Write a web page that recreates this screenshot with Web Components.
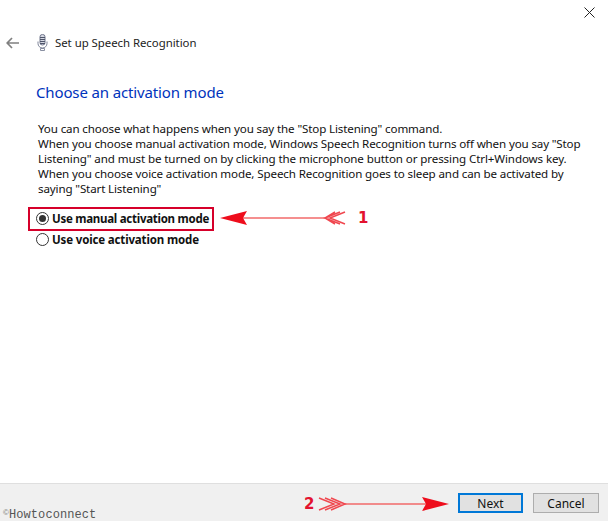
<!DOCTYPE html>
<html><head><meta charset="utf-8">
<style>
html,body{margin:0;padding:0;background:#fff}
body{width:608px;height:521px;overflow:hidden;font-family:"Noto Sans","Open Sans",sans-serif}
</style></head>
<body>
<wizard-window>
  <wizard-header slot="header" title-text="Set up Speech Recognition"></wizard-header>
  <h-title>Choose an activation mode</h-title>
  <p-text>
    <span style="letter-spacing:-.135px">You can choose what happens when you say the "Stop Listening" command.</span><br>
    <span style="letter-spacing:-.15px">When you choose manual activation mode, Windows Speech Recognition turns off when you say "Stop</span><br>
    <span style="letter-spacing:-.11px">Listening" and must be turned on by clicking the microphone button or pressing Ctrl+Windows key.</span><br>
    <span style="letter-spacing:-.13px">When you choose voice activation mode, Speech Recognition goes to sleep and can be activated by</span><br>
    <span style="letter-spacing:-.14px">saying "Start Listening"</span>
  </p-text>
  <radio-opt checked>Use manual activation mode</radio-opt>
  <radio-opt>Use voice activation mode</radio-opt>
  <wizard-footer slot="footer"></wizard-footer>
</wizard-window>
<red-notes></red-notes>
<script>
function def(name,html,onInit){
  customElements.define(name,class extends HTMLElement{
    constructor(){super();this.attachShadow({mode:'open'}).innerHTML=typeof html==='function'?html(this):html;}
    connectedCallback(){if(onInit)onInit(this);}
  });
}
def('wizard-window',`<style>
:host{display:flex;flex-direction:column;width:608px;height:521px;box-sizing:border-box;color:#000;font:12px/15px "Noto Sans","Open Sans",sans-serif}
.close{display:flex;justify-content:flex-end;padding:7px 13px 0 0;height:24px;box-sizing:border-box}
.main{flex:1;display:flex;flex-direction:column}
</style>
<div class="close"><svg width="11" height="11" viewBox="0 0 11 11"><path d="M.5.5l10 10M10.5.5l-10 10" stroke="#222" stroke-width="1" fill="none"/></svg></div>
<div class="main"><slot name="header"></slot><slot></slot></div>
<slot name="footer"></slot>`);
def('wizard-header',el=>`<style>
:host{display:flex;align-items:center;height:37px;box-sizing:border-box;padding:0 0 0 6px;color:#222;font-size:11.4px;letter-spacing:-.03px}
svg{display:block}
.a{margin-right:18px}.m{margin-right:7px}
</style>
<svg class="a" width="13" height="12" viewBox="0 0 13 12"><path d="M6 1L1.200 6 6 11M1.500 6H13" stroke="#808080" stroke-width="1.700" fill="none"/></svg>
<svg class="m" width="11" height="17" viewBox="0 0 11 17"><rect x="3" y=".5" width="5" height="10.500" rx="2.300" fill="#d5d8e2" stroke="#6f758b"/><path d="M3 3.500h5M3 5.500h5M3 7.500h5M3 9.500h5" stroke="#4f556a" stroke-width="1"/><path d="M1 7.500v2a4.500 4.500 0 0 0 9 0v-2" stroke="#7c8296" fill="none"/><path d="M3.500 14.500h4v2h-4z" fill="#fff" stroke="#7c8296" stroke-width=".9"/></svg>
<span>${el.getAttribute('title-text')}</span>`);
def('h-title',`<style>:host{display:block;margin:21px 0 0 36px;height:20px;font-size:15px;line-height:20px;color:#0033bc;letter-spacing:-.14px}</style><slot></slot>`);
def('p-text',`<style>:host{display:block;margin:19px 0 0 38px;font-size:11.600px;line-height:15px;white-space:nowrap;color:#111}</style><slot></slot>`);
def('radio-opt',el=>`<style>
:host{display:flex;align-items:center;height:21px;margin-left:36px;font-size:11.500px;font-weight:700;color:#111}
.r{width:13px;height:13px;box-sizing:border-box;border:1px solid #333;border-radius:50%;background:#fff;margin-right:3px;display:flex;align-items:center;justify-content:center}
.d{width:7px;height:7px;border-radius:50%;background:#333}
</style><span class="r">${el.hasAttribute('checked')?'<span class="d"></span>':''}</span><slot></slot>`,el=>{
  if(el.hasAttribute('checked')){el.style.marginTop='12px';el.style.letterSpacing='-.27px';}else{el.style.letterSpacing='-.15px';}
});
def('wizard-footer',`<style>
:host{display:flex;justify-content:flex-end;align-items:flex-start;gap:10px;height:38px;box-sizing:border-box;background:#f0f0f0;border-top:1px solid #dfdfdf;padding:9px 9px 0 0;position:relative}
button{width:66px;height:20px;box-sizing:border-box;background:#e1e1e1;border:1px solid #adadad;padding:1px 0 0;font:12px/1 "Noto Sans","Open Sans",sans-serif;color:#111}
.p{border:2px solid #0078d7;width:65px}
.w{position:absolute;left:3px;top:24px;font:12px/14px "Liberation Mono",monospace;letter-spacing:.08px;color:#555}
.w sup{font-size:8px;line-height:0;vertical-align:3px;color:#777;font-family:"Liberation Sans",sans-serif}
</style>
<span class="w"><sup>©</sup>Howtoconnect</span>
<button class="p">Next</button><button>Cancel</button>`);
def('red-notes',`<style>
:host{display:block;position:absolute;left:0;top:0;width:608px;height:521px;pointer-events:none}
.box{position:absolute;left:28px;top:207px;width:186px;height:24px;box-sizing:border-box;border:2px solid #d6002a}
svg{position:absolute;left:0;top:0}
.n{position:absolute;font:700 15px/18px "DejaVu Sans",sans-serif;color:#e3122f}
</style>
<div class="box"></div>
<svg width="608" height="521" viewBox="0 0 608 521" fill="none">
<path d="M240 218H326" stroke="#f26a6a" stroke-width="1.500"/>
<path d="M220 218L247 211L243 218L247 225Z" fill="#ee0d1c"/>
<path d="M345 212L330 218L345 224M340 212L325 218L340 224M335 212L325 218L335 224" stroke="#f0474f" stroke-width="1.500"/>
<path d="M345 504H430" stroke="#f26a6a" stroke-width="1.500"/>
<path d="M449 504L422 497L426 504L422 511Z" fill="#ee0d1c"/>
<path d="M319 498L334 504L319 510M325 498L340 504L325 510M331 498L345 504L331 510" stroke="#f0474f" stroke-width="1.500"/>
</svg>
<span class="n" style="left:358px;top:209px">1</span>
<span class="n" style="left:304px;top:495px">2</span>`);
</script>
</body></html>
